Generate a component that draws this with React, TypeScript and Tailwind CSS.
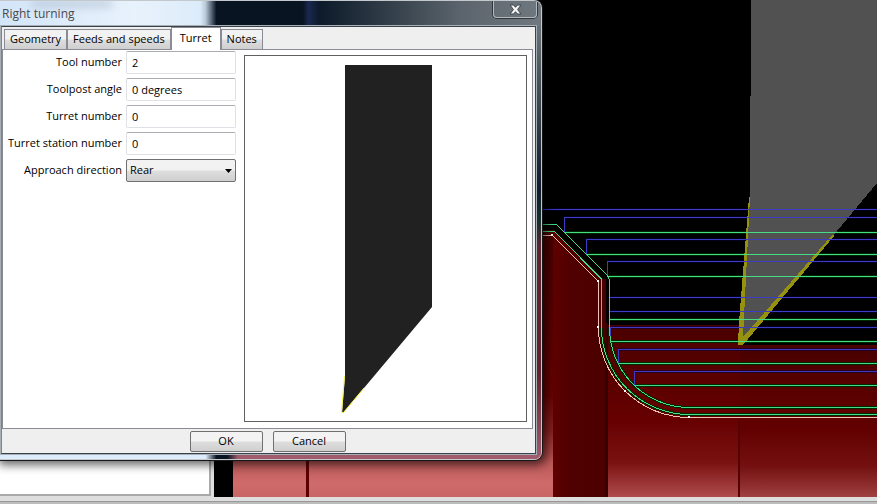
import { useState } from "react";

type Pass = { x: number; top: number; bottom: number };

const TABS = ["Geometry", "Feeds and speeds", "Turret", "Notes"];

// roughing passes: rapid at the top, cut at the bottom
const PASSES: Pass[] = [
  { x: 564, top: 217, bottom: 232 },
  { x: 586, top: 239, bottom: 254 },
  { x: 607, top: 261, bottom: 276 },
  { x: 609, top: 311, bottom: 319 },
  { x: 610, top: 327, bottom: 341 },
  { x: 618, top: 349, bottom: 363 },
  { x: 634, top: 371, bottom: 385 },
];

const PROFILE_POINTS = [
  [552, 235],
  [598, 281],
  [598, 327],
  [625, 391],
  [689, 417],
];

function MachineView() {
  return (
    <svg
      className="min-w-0 flex-1 bg-black"
      viewBox="214 0 663 497"
      preserveAspectRatio="xMinYMin slice"
      shapeRendering="crispEdges"
      aria-label="Toolpath preview"
    >
      <defs>
        <linearGradient id="stock" gradientUnits="userSpaceOnUse" x1="0" y1="230" x2="0" y2="497">
          <stop offset="0" stopColor="#480000" />
          <stop offset="0.3" stopColor="#580000" />
          <stop offset="0.62" stopColor="#6a0202" />
          <stop offset="0.75" stopColor="#8a2020" />
          <stop offset="0.87" stopColor="#bc5858" />
          <stop offset="0.95" stopColor="#cf6b6b" />
          <stop offset="1" stopColor="#c96464" />
        </linearGradient>
        <linearGradient id="shoulder" x1="0" y1="0" x2="1" y2="0">
          <stop offset="0" stopColor="#600000" />
          <stop offset="0.3" stopColor="#500000" />
          <stop offset="0.93" stopColor="#4c0000" />
          <stop offset="1" stopColor="#2c0000" />
        </linearGradient>
        <linearGradient id="bar" gradientUnits="userSpaceOnUse" x1="0" y1="323" x2="0" y2="497">
          <stop offset="0" stopColor="#4a0000" />
          <stop offset="0.35" stopColor="#5c0000" />
          <stop offset="0.55" stopColor="#660000" />
          <stop offset="0.8" stopColor="#7a1111" />
          <stop offset="1" stopColor="#b04c4c" />
        </linearGradient>
        <linearGradient id="barEnd" gradientUnits="userSpaceOnUse" x1="0" y1="345" x2="0" y2="497">
          <stop offset="0" stopColor="#480000" />
          <stop offset="0.3" stopColor="#5a0000" />
          <stop offset="0.55" stopColor="#620000" />
          <stop offset="0.8" stopColor="#741010" />
          <stop offset="1" stopColor="#a04040" />
        </linearGradient>
      </defs>

      {/* stock */}
      <path d="M233 230H554V497H233Z" fill="url(#stock)" />
      <path d="M306 440h3v57h-3z" fill="#5c0000" />
      <path d="M553 230L602 279H606V323H608V497H553Z" fill="url(#shoulder)" />
      <path d="M608 325H740V497H608Z" fill="url(#bar)" />
      <path d="M740 345H877V497H740Z" fill="url(#barEnd)" />
      <path d="M738 419h2v78h-2z" fill="#560000" />

      {/* dark edges around the moves */}
      <g fill="none" stroke="#00003c" strokeOpacity="0.5" strokeWidth="3">
        <path d="M543 209.5H877M609 297.5H877" />
        {PASSES.map((pass) => (
          <path key={pass.top} d={`M877 ${pass.top + 0.5}H${pass.x}`} />
        ))}
      </g>
      <g fill="none" stroke="#002800" strokeWidth="3">
        {PASSES.map((pass) => (
          <path key={pass.top} d={`M${pass.x} ${pass.bottom + 0.5}H877`} />
        ))}
        <path d="M609.5 327.5A80 80 0 0 0 689.5 407.5H877M601.5 327.5A88 87 0 0 0 689.5 414.5H877" />
      </g>

      {/* insert */}
      <path d="M751 0H877V183L742 345H739L750 197Z" fill="#515151" />
      <path d="M749 197h1L743 337L833 234L834 236L743 345H738L739 322Z" fill="#96920f" />

      {/* tool moves */}
      <g fill="none" stroke="#3c3cc4">
        <path d="M543 209.5H877M609 297.5H877" />
        {PASSES.map((pass) => (
          <path key={pass.top} d={`M877 ${pass.top + 0.5}H${pass.x + 0.5}V${pass.bottom}`} />
        ))}
      </g>
      <g fill="none" stroke="#44dc84">
        {PASSES.map((pass) => (
          <path key={pass.top} d={`M${pass.x} ${pass.bottom + 0.5}H877`} />
        ))}
        <path d="M543 224.5H556.5L608.5 276.5L609.5 281V327.5A80 80 0 0 0 689.5 407.5H877" />
        <path d="M543 231.5H554.5L601.5 279V327.5A88 87 0 0 0 689.5 414.5H877" />
      </g>
      <path
        d="M543 235.5H552.5L598.5 281.5V327.5A91 90 0 0 0 689.5 417.5H877"
        fill="none"
        stroke="#eec0b8"
      />
      {PROFILE_POINTS.map(([x, y]) => (
        <rect key={`${x}-${y}`} x={x - 1} y={y - 1} width="2" height="2" fill="white" />
      ))}
    </svg>
  );
}

function TextRow({ id, label, initial }: { id: string; label: string; initial: string }) {
  const [value, setValue] = useState(initial);

  return (
    <>
      <label htmlFor={id} className="text-right whitespace-nowrap">
        {label}
      </label>
      <input
        id={id}
        type="text"
        className="h-[23px] w-full rounded-xs border border-[#e0e1e6] border-t-[#abadb3] bg-white px-[5px] outline-none"
        value={value}
        onChange={(e) => setValue(e.target.value)}
      />
    </>
  );
}

function TurretForm() {
  const [direction, setDirection] = useState("Rear");

  return (
    <div className="grid w-[233px] shrink-0 grid-cols-[1fr_110px] content-start items-center gap-1 pt-px">
      <TextRow id="tool" label="Tool number" initial="2" />
      <TextRow id="angle" label="Toolpost angle" initial="0 degrees" />
      <TextRow id="turret" label="Turret number" initial="0" />
      <TextRow id="station" label="Turret station number" initial="0" />
      <label htmlFor="direction" className="text-right whitespace-nowrap">
        Approach direction
      </label>
      <div className="relative">
        <select
          id="direction"
          className="block h-[23px] w-full appearance-none rounded-xs border border-[#707070] bg-linear-to-b from-[#f2f2f2] from-45% via-[#dddddd] via-55% to-[#cfcfcf] px-[3px] outline-none"
          value={direction}
          onChange={(e) => setDirection(e.target.value)}
        >
          <option>Rear</option>
          <option>Front</option>
        </select>
        <svg className="pointer-events-none absolute top-2.5 right-1 h-1 w-[7px]" viewBox="0 0 7 4">
          <path d="M0 0H7L3.5 4Z" />
        </svg>
      </div>
    </div>
  );
}

function ToolPreview() {
  return (
    <div className="mt-[5px] mr-[5px] mb-1.5 min-w-0 flex-1 border border-[#606060] bg-white">
      <svg className="block w-full" viewBox="245 56 281 365" aria-label="Tool shape">
        <path d="M345 65H432V307L343 413H342L345 376Z" fill="#212121" />
        <path
          d="M344.5 376L341.5 412.5H343.5L364 388"
          fill="none"
          stroke="#f8f440"
          strokeWidth="1"
        />
      </svg>
    </div>
  );
}

function DialogButton({ value }: { value: string }) {
  return (
    <button
      type="button"
      className="h-[21px] w-[73px] rounded-xs border border-[#707070] bg-linear-to-b from-[#f3f3f3] from-45% via-[#dddddd] via-55% to-[#cfcfcf]"
    >
      {value}
    </button>
  );
}

function ToolDialog() {
  const [tab, setTab] = useState("Turret");

  return (
    <div
      role="dialog"
      aria-labelledby="dialog-title"
      className="absolute top-0 left-0 flex w-[542px] max-w-full flex-col overflow-hidden rounded-r-lg border-y border-r border-[#c3c8cc] bg-linear-to-b from-[#6b737a] via-[#081422] via-42% to-[#98586a] shadow-[0_0_0_1px_#181818,2px_2px_10px_3px_rgba(0,0,0,0.6)]"
    >
      {/* vertical glass tint behind the right edge */}
      <div className="absolute top-6 right-0 bottom-0 w-[5px] bg-[linear-gradient(#6b737a,#4a525c_12%,#101c2c_38%,#12302f_45%,#5c2430_51%,#64202e_80%,#a05c6c)]" />
      <div className="relative flex h-[25px] items-center justify-between bg-[linear-gradient(90deg,#d3e5f8,#e8f2fc_25%,#dcebfa_37%,#b8c8d8_38%,#081422_40%,#081422_56%,#1a2850_57%,#0c1a2a_59%,#39444e_74%,#5b646c_85%,#70787f)]">
        <div className="absolute top-0 left-8 h-1.5 w-20 bg-slate-500/30 blur-xs" />
        <h1 id="dialog-title" className="relative pl-0.5 text-xs text-[#4a4a4a]">
          Right turning
        </h1>
        <button
          type="button"
          aria-label="Close"
          className="mr-1 flex h-[17px] w-[44px] items-center justify-center self-start rounded-b-sm border border-t-0 border-[#b4babe] shadow-[0_0_0_1px_#30363c]"
        >
          <svg className="h-[11px] w-[13px]" viewBox="0 0 13 11">
            <path
              d="M1 1H4.6L6.5 3.3L8.4 1H12L8.6 5.5L12 10H8.4L6.5 7.7L4.6 10H1L4.4 5.5Z"
              fill="#f4f4f4"
              stroke="#3d454c"
              strokeWidth="1"
            />
          </svg>
        </button>
      </div>

      <div className="relative mr-[5px] ml-px border border-[#39424c] border-l-[#7c8490] bg-[#efefef] shadow-[0_0_0_1px_#a8b0b6]">
        <div role="tablist" className="flex h-[22px] items-end pl-0.5">
          {TABS.map((name) => (
            <button
              key={name}
              type="button"
              role="tab"
              aria-selected={tab === name}
              className={
                tab === name
                  ? "relative z-10 -mb-px h-[23px] border border-b-0 border-[#898c95] bg-white px-2 pb-0.5"
                  : "h-5 border border-b-0 border-[#898c95] bg-linear-to-b from-[#f2f2f2] from-45% via-[#dddddd] via-55% to-[#cfcfcf] px-[5px]"
              }
              onClick={() => setTab(name)}
            >
              {name}
            </button>
          ))}
        </div>
        <div className="mr-0.5 flex gap-2 border border-[#898c95] bg-white">
          <TurretForm />
          <ToolPreview />
        </div>
        <div className="mr-0.5 flex justify-center gap-2.5 pt-0.5 pb-px">
          <DialogButton value="OK" />
          <DialogButton value="Cancel" />
        </div>
      </div>
      <div className="h-[5px] bg-[linear-gradient(90deg,#dcecfc_38%,#081422_40%,#081422_42%,#a05c6c_44%,#a05c6c)]" />
    </div>
  );
}

function App() {
  return (
    <main className="relative flex h-screen flex-col overflow-hidden bg-[#dedede] font-['Open_Sans','Noto_Sans',sans-serif] text-[11px] text-black">
      <div className="flex min-h-0 flex-1">
        <div className="mr-[3px] mb-px w-[211px] shrink-0 border-r-2 border-b-2 border-[#a9a9a9] bg-white" />
        <MachineView />
      </div>
      <div className="mt-1 h-[3px] border-t border-[#999999] bg-[#bcbcbc]" />
      <ToolDialog />
    </main>
  );
}

export default App;
